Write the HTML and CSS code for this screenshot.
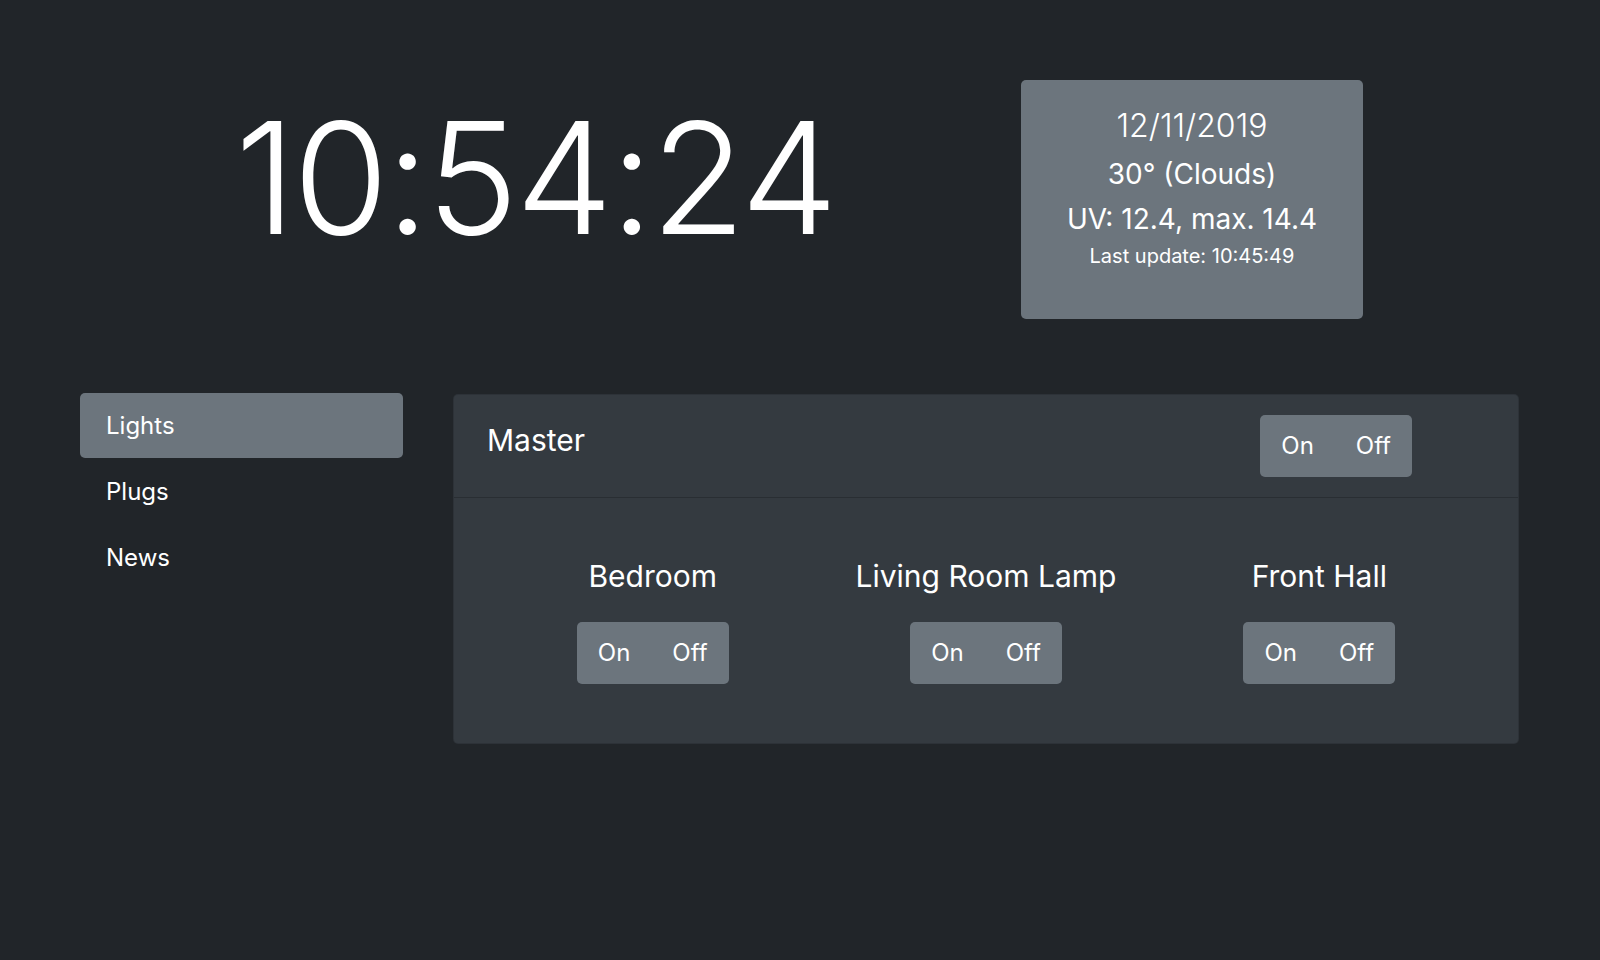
FILE: index.html
```html
<!DOCTYPE html>
<html lang="en">
<head>
<meta charset="utf-8">
<title>Dashboard</title>
<link rel="stylesheet" href="styles.css">
</head>
<body>
<div class="page">
  <div class="top-row">
    <div class="clock-col">
      <div class="clock">10:54:24</div>
    </div>
    <div class="weather">
      <div class="w-date">12/11/2019</div>
      <div class="w-line w-temp">30° (Clouds)</div>
      <div class="w-line w-uv">UV: 12.4, max. 14.4</div>
      <div class="w-update">Last update: 10:45:49</div>
    </div>
  </div>
  <div class="main-row">
    <nav class="sidebar">
      <div class="nav-item active">Lights</div>
      <div class="nav-item">Plugs</div>
      <div class="nav-item">News</div>
    </nav>
    <section class="panel">
      <div class="panel-header">
        <div class="master">Master</div>
        <div class="btn-group"><span class="btn">On</span><span class="btn">Off</span></div>
      </div>
      <div class="panel-body">
        <div class="light">
          <div class="light-name">Bedroom</div>
          <div class="btn-group"><span class="btn">On</span><span class="btn">Off</span></div>
        </div>
        <div class="light">
          <div class="light-name">Living Room Lamp</div>
          <div class="btn-group"><span class="btn">On</span><span class="btn">Off</span></div>
        </div>
        <div class="light">
          <div class="light-name">Front Hall</div>
          <div class="btn-group"><span class="btn">On</span><span class="btn">Off</span></div>
        </div>
      </div>
    </section>
  </div>
</div>
</body>
</html>
```
FILE: styles.css
```css
html, body {
  margin: 0;
  padding: 0;
  background: #212529;
  color: #ffffff;
  font-family: Inter, "Noto Sans", "Liberation Sans", sans-serif;
}
.page {
  padding: 80px 80px 0 80px;
}
.top-row {
  display: flex;
  align-items: flex-start;
}
.clock-col {
  width: 910px;
  display: flex;
  justify-content: center;
  padding-top: 5px;
}
.clock {
  font-size: 155px;
  font-weight: 300;
  line-height: 1.2;
  letter-spacing: -3px;
}
.weather {
  margin-left: 31px;
  width: 342px;
  height: 239px;
  box-sizing: border-box;
  background: #6c757d;
  border-radius: 5px;
  text-align: center;
  padding-top: 27px;
}
.w-date {
  font-size: 32px;
  font-weight: 300;
  line-height: 1.2;
}
.w-line {
  font-size: 28px;
  font-weight: 400;
  line-height: 1.2;
}
.w-temp { margin-top: 13px; }
.w-uv { margin-top: 11px; }
.w-update {
  margin-top: 7px;
  font-size: 20px;
  line-height: 1.2;
}
.main-row {
  display: flex;
  align-items: flex-start;
  gap: 50px;
  margin-top: 75px;
}
.sidebar {
  width: 323px;
  flex: none;
  margin-top: -1px;
}
.nav-item {
  height: 65px;
  display: flex;
  align-items: center;
  padding: 1px 26px 0 26px;
  font-size: 24px;
  line-height: 36px;
  border-radius: 5px;
  box-sizing: border-box;
}
.nav-item + .nav-item {
  margin-top: 1px;
}
.nav-item.active {
  background: #6c757d;
}
.panel {
  width: 1066px;
  height: 350px;
  box-sizing: border-box;
  background: #343a40;
  border: 1px solid rgba(0,0,0,0.125);
  border-radius: 5px;
}
.panel-header {
  height: 103px;
  box-sizing: border-box;
  border-bottom: 1px solid rgba(0,0,0,0.2);
  display: flex;
  align-items: center;
  justify-content: space-between;
  padding: 0 106px 0 33px;
}
.master {
  font-size: 30px;
  font-weight: 400;
  line-height: 1.2;
  margin-bottom: 13px;
}
.btn-group {
  display: inline-flex;
  background: #6c757d;
  border-radius: 5px;
  height: 62px;
}
.btn {
  display: flex;
  align-items: center;
  justify-content: center;
  padding: 0 21px;
  font-size: 24px;
  line-height: 36px;
}
.panel-body {
  display: grid;
  grid-template-columns: 1fr 1fr 1fr;
  padding: 60px 32px 0 32px;
}
.light {
  display: flex;
  flex-direction: column;
  align-items: center;
}
.light-name {
  font-size: 30px;
  font-weight: 400;
  line-height: 1.2;
  margin-bottom: 28px;
}
```
